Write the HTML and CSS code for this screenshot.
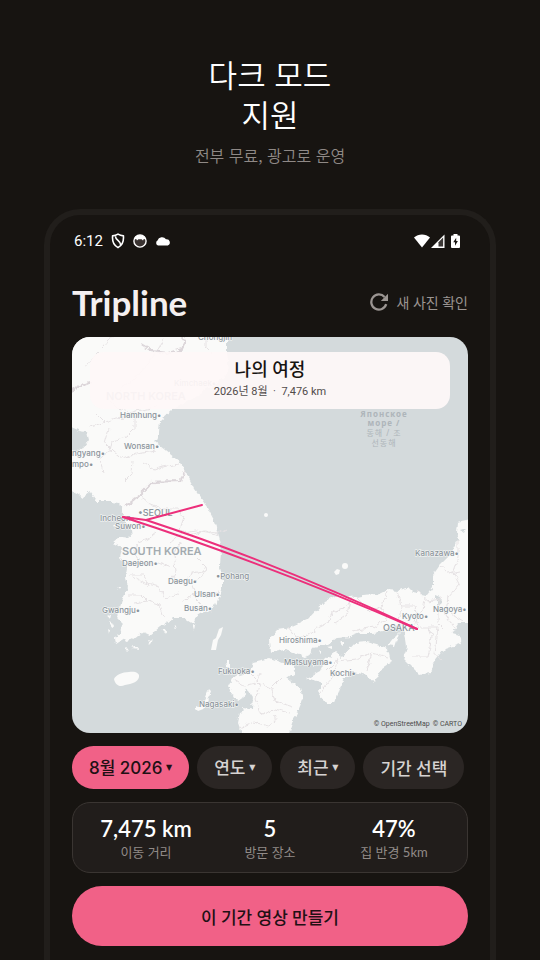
FILE: index.html
```html
<!DOCTYPE html>
<html lang="ko">
<head>
    <meta charset="UTF-8">
    <meta name="viewport" content="width=device-width, initial-scale=1.0">
    <title>Tripline</title>
    <link rel="stylesheet" href="styles.css">
</head>
<body>
    <header class="intro">
        <h1>다크 모드<br>지원</h1>
        <p>전부 무료, 광고로 운영</p>
    </header>

    <main class="phone">
        <div class="status-bar">
            <div class="status-left">
                <span class="clock">6:12</span>
                <svg width="14" height="16" viewBox="0 0 14 16" fill="none" stroke="#fff" stroke-width="1.6">
                    <path d="M7 1.2C5.3 2.3 3.4 2.8 1.6 2.9C1.1 8.3 2.6 12.5 7 14.6C11.4 12.5 12.9 8.3 12.4 2.9C10.6 2.8 8.7 2.3 7 1.2Z"/>
                    <path d="M4.4 3.2C4.5 7.4 9.6 7.4 9.7 12"/>
                </svg>
                <svg width="14" height="14" viewBox="0 0 14 14">
                    <circle cx="7" cy="7" r="6.1" fill="#3a3331" stroke="#fff" stroke-width="1.4"/>
                    <path d="M1.2 5.6C1.8 2.4 4.4 1 7 1s5.200 1.400 5.800 4.600L10.800 5 10 6.400 8.600 5.300H5.400L4 6.400 3.200 5Z" fill="#fff"/>
                </svg>
                <svg width="16" height="10" viewBox="0 0 16 10" fill="#fff">
                    <path d="M3 9.500A2.700 2.700 0 0 1 2.500 4.600 4.800 4.800 0 0 1 11 3.200 3.300 3.300 0 0 1 12.800 9.500Z"/>
                </svg>
            </div>
            <div class="status-right">
                <svg width="16" height="14" viewBox="0 0 16 14" fill="#fff"><path d="M8 13.600L0 3.500C4.500-.4 11.500-.4 16 3.500Z"/></svg>
                <svg width="14" height="14" viewBox="0 0 14 14"><path d="M0 14L13.500.5V14Z" fill="#fff"/><path d="M7.500 12.500V8.200L12.100 3.600V12.500Z" fill="#3c3836"/></svg>
                <svg class="battery" width="9" height="14" viewBox="0 0 9 14"><path d="M0 2.500Q0 1.500 1 1.500H2.500V0H6.500V1.500H8Q9 1.500 9 2.500V13Q9 14 8 14H1Q0 14 0 13Z" fill="#fff"/><path d="M5.200 3.800L2.200 8.300H4V11.800L6.900 7H5.200Z" fill="#171411"/></svg>
            </div>
        </div>

        <div class="app-bar">
            <h2>Tripline</h2>
            <button class="refresh" type="button">
                <svg width="18" height="18" viewBox="0 0 18 18">
                    <path d="M14.600 4A7.600 7.600 0 1 0 16.200 11.200" fill="none" stroke="#9b9592" stroke-width="2.300"/>
                    <path d="M18 .8V8H10.800Z" fill="#9b9592"/>
                </svg>
                새 사진 확인
            </button>
        </div>

        <section class="map" aria-label="나의 여정">
            <svg class="map-canvas" viewBox="0 0 396 396">
                <defs>
                    <filter id="coast" x="0" y="0" width="100%" height="100%" filterUnits="userSpaceOnUse">
                        <feTurbulence type="fractalNoise" baseFrequency="0.16" numOctaves="3" seed="4"/>
                        <feDisplacementMap in="SourceGraphic" scale="6" xChannelSelector="R" yChannelSelector="G"/>
                    </filter>
                </defs>
                <g filter="url(#coast)">
                    <g class="land">
                        <!-- Korea -->
                        <path d="M-9-9H155L155 15 157 35 141 48 121 61 100 73 88 84 87 95 83 105 93 113 108 125 115 137 123 153 135 170 143 185 146 200 149 213 148 230 150 240 150 253 146 261 143 268 136 275 125 278 121 286 113 281 101 281 95 286 88 290 78 298 71 295 61 303 53 305 48 296 51 286 45 280 48 270 51 261 56 250 53 240 55 230 48 220 50 211 41 206 48 200 61 201 60 193 53 186 51 176 48 166 38 165 25 165 18 155 11 160 5 156-9 150Z"/>
                        <!-- Honshu -->
                        <path d="M405 181L385 185 384 195 386 203 380 216 368 228 361 238 361 250 355 258 341 255 336 250 326 254 315 253 305 258 290 259 278 261 265 258 253 264 235 283 218 291 205 293 197 302 198 316 212 313 228 318 235 321 241 311 256 308 265 301 278 300 288 296 301 296 315 293 325 289 333 296 335 310 331 321 341 331 348 338 358 336 361 326 371 313 390 306 388 298 380 296 386 286 405 286Z"/>
                        <!-- Shikoku -->
                        <path d="M253 323L263 315 270 320 283 306 295 305 316 311 319 325 310 331 302 346 295 338 281 335 273 341 268 351 263 366 253 366 246 355 250 346 235 341 248 334Z"/>
                        <!-- Kyushu -->
                        <path d="M198 321L181 325 178 335 161 340 156 350 161 360 171 363 175 351 181 360 180 371 168 376 166 386 173 405H215L223 380 231 361 228 351 215 341 223 335 220 328 211 326Z"/>
                        <path d="M328 294L323 309 316 308 322 300ZM154 324h4v6h-3ZM123 371l8-4 6-14 2 2-5 16-8 3Z"/>
                        <path d="M43 300l7-4 2 6-8 5ZM38 285l4 2-2 4ZM35 277l4 1-1 5ZM60 311l5-2 2 3ZM53 311l4 1-2 2ZM76 302l4 1-2 3ZM100 289l3-1 1 5ZM121 287l3 1-1 6ZM90 292l4 1-1 4ZM36 292l3 2-2 3ZM248 306h5v3h-4ZM256 310l5-1v3ZM268 305h4v3ZM246 314h3v3ZM170 372l6 1-4 5ZM240 326l3 1-3 3ZM40 187l3 1-1 3ZM45 250l3 1-1 3Z"/>
                    </g>
                    <g class="water">
                        <path d="M-5 88L8 94 15 95 17 103 10 113-5 112Z"/>
                        <path d="M364 258l5 2-1 8-4 2ZM388 193l6-2-2 5Z"/>
                    </g>
                    <g class="borders">
                        <path d="M0 53l8-4 10-4M15 30l8-12 8-8 10-12M40 64l10-14 12-8 14-16 8-10 8-14M70 8l10 6 16 2 14-4 4-8-6-8M134 0v10l6 6M36 62l10 10 10 3 14-2 14-3M24 76l8 8M18 90l12-4 14-5 16-2 3-6M63 80v12l-8 8-16 4-2 10M37 92l-4 14 8 8 10 8 14-6 18-3M39 114l-12 8 4 12M61 124l-1 12-8 8M72 126l10 7 8-3 18-3"/>
                        <path d="M53 168l16-12 12-12 28 0 4-12M66 158l10 8 14 6 16 0 6 8-4 12 10 6 14-4 14 2 8-4M84 196l-8 6-10 4-4 10 8 12 16-2 12 4M98 206l12-10 14-2 22 4M108 206l-6 10 2 18-6 10M124 220l10 10-4 10-10 6 4 10-14 10M60 240l12 6 14 4 8 12 14-6M62 266l14-2 12 4 4 12M56 258l14 0 8 8M110 244l12-8 12-3M134 260l14-6M118 256l14 14 8 4M76 250l-4-12-14 0"/>
                        <path d="M216 290l8 10 12-2 10-8 10-5 4-10 12-4 8-10M278 262l-3 16-12 8M284 260l14 14 12-4 5-15M310 270l4 12-12 8-22 4M325 255l4 14 14 0 2 16M330 270l-4 12 4 8M352 262l-2 12-8 6 4 12M345 254l12 10 14-3M368 229l10 8 10-2M386 203v18l-5 14 6 12-11 13M376 258l-2 20 8 12M366 262v24l6 6M348 290l18 0-3 28 6 5M356 290l4 10-4 20-15 0M378 276l13 8"/>
                        <path d="M254 334l10-10 20-2 16-6 16 4M266 320l-4 18-14 18M300 316l-6 18M179 337l10 10 10 4 10-10M162 343l10 6 12-3 4-10M189 348l-6 14 6 16 14-6 14 4M199 350l4 14 18 6M167 391l14-6 16 4 8-10"/>
                    </g>
                    <path class="frontier" d="M53 169l16-12 12-12 28-1 4-10M-2 54l10-5 10-4M70 8l10 6 16 2 14-4 4-8-6-8"/>
                </g>
                <g class="land">
                    <path d="M42 342C44 338 50 335 57 335 63 334 68 336 67 340 66 345 60 347 53 348 47 351 43 347 42 342Z"/>
                    <path d="M147 292L151 290 149 298 146 303 144 313 139 313 141 303 144 301Z"/>
                    <circle cx="273" cy="229" r="3"/>
                    <path d="M262 235l3-3 3 1-1 4-3 1Z"/>
                    <circle cx="194" cy="178" r="2"/>
                </g>
                <g class="labels">
                    <text class="country" x="34" y="63">NORTH KOREA</text>
                    <text class="country" x="50" y="218">SOUTH KOREA</text>
                    <text x="126" y="3">Chongjin</text>
                    <text x="102" y="49">Kimchaek•</text>
                    <text x="48" y="81">Hamhung•</text>
                    <text x="52" y="112">Wonsan•</text>
                    <text x="0" y="119">ngyang•</text>
                    <text x="0" y="130">mpo•</text>
                    <text class="capital" x="66" y="179">•SEOUL</text>
                    <text x="28" y="184">Incheon•</text>
                    <text x="43" y="192">Suwon•</text>
                    <text x="50" y="229">Daejeon•</text>
                    <text x="96" y="247">Daegu•</text>
                    <text x="144" y="242">•Pohang</text>
                    <text x="122" y="260">Ulsan•</text>
                    <text x="112" y="274">Busan•</text>
                    <text x="30" y="276">Gwangju•</text>
                    <text x="146" y="337">Fukuoka•</text>
                    <text x="127" y="370">Nagasaki•</text>
                    <text x="207" y="306">Hiroshima•</text>
                    <text x="212" y="328">Matsuyama•</text>
                    <text x="258" y="339">Kochi•</text>
                    <text x="330" y="282">Kyoto•</text>
                    <text class="capital" x="311" y="294">OSAKA</text>
                    <text x="361" y="275">Nagoya•</text>
                    <text x="343" y="219">Kanazawa•</text>
                </g>
                <g class="sea">
                    <text x="312" y="80">Японское</text>
                    <text x="312" y="89">море /</text>
                    <text class="ko" x="312" y="99">동해 / 조</text>
                    <text class="ko" x="312" y="109">선동해</text>
                </g>
                <g class="route">
                    <path d="M130 168L74 183Q205 226 345 292"/>
                    <path d="M51 180L74 183"/>
                    <path d="M51 180Q190 225 345 292"/>
                </g>
            </svg>
            <div class="map-card">
                <h3>나의 여정</h3>
                <p>2026년 8월 &nbsp;·&nbsp; 7,476 km</p>
            </div>
            <div class="credits">
                <a href="#osm">© OpenStreetMap</a>
                <a href="#carto">© CARTO</a>
            </div>
        </section>

        <div class="filters">
            <label class="chip active">
                <select aria-label="월"><option>8월 2026</option></select>
                <span class="arrow">▼</span>
            </label>
            <label class="chip">
                <select aria-label="연도"><option>연도</option></select>
                <span class="arrow">▼</span>
            </label>
            <label class="chip">
                <select aria-label="최근"><option>최근</option></select>
                <span class="arrow">▼</span>
            </label>
            <button class="chip" type="button">기간 선택</button>
        </div>

        <dl class="stats">
            <div><dd>7,475 km</dd><dt>이동 거리</dt></div>
            <div><dd>5</dd><dt>방문 장소</dt></div>
            <div><dd>47%</dd><dt>집 반경 5km</dt></div>
        </dl>

        <button class="create" type="button">이 기간 영상 만들기</button>
    </main>
</body>
</html>
```

FILE: styles.css
```css
* { box-sizing: border-box; }
body {
    margin: 0;
    min-height: 100vh;
    display: flex;
    flex-direction: column;
    background-color: #171411;
    color: #fff;
    font-family: Lato, "Noto Sans CJK KR", sans-serif;
}
h1, h2, h3, p, dl, dd { margin: 0; }
button, select {
    font-family: inherit;
    color: inherit;
    border: none;
    padding: 0;
    background: none;
    cursor: pointer;
}
svg { display: block; }

.intro {
    padding: 54px 20px 0;
    text-align: center;
    font-family: "Noto Sans CJK KR", sans-serif;
}
.intro h1 { font-size: 31px; line-height: 40px; font-weight: 350; }
.intro p { margin-top: 9px; font-size: 16px; line-height: 24px; font-weight: 350; color: #8f8986; }

.phone {
    flex: 1;
    margin: 42px 44px 0;
    padding: 0 22px 14px;
    border: 6px solid #211e1b;
    border-bottom: none;
    border-radius: 36px 36px 0 0;
}

/* status bar */
.status-bar {
    display: flex;
    justify-content: space-between;
    align-items: center;
    height: 52px;
    padding: 0 8px 0 2px;
}
.status-left, .status-right { display: flex; align-items: center; }
.status-left { gap: 8px; }
.status-right { gap: 1px; }
.battery { margin-left: 5px; }
.clock { font: 15px Roboto, sans-serif; }

.app-bar {
    display: flex;
    justify-content: space-between;
    align-items: center;
    height: 70px;
}
.app-bar h2 { font-size: 35px; line-height: 44px; font-weight: 700; color: #f5f0f0; }
.refresh { display: flex; align-items: center; gap: 8px; font-size: 14px; color: #9b9592; }

/* map */
.map {
    position: relative;
    overflow: hidden;
    border-radius: 18px;
    background-color: #d4dadc;
}
.map-canvas { width: 100%; height: auto; }
.land { fill: #fafaf9; }
.water { fill: #d4dadc; }
.borders { fill: none; stroke: #e6e2e4; stroke-width: 1; }
.frontier { fill: none; stroke: #dcd6da; stroke-width: 2; }
.labels {
    font: 500 8px Inter, sans-serif;
    fill: #8b949b;
    stroke: #fafaf9;
    stroke-width: 1;
    paint-order: stroke;
}
.labels .country { font-size: 11px; font-weight: 600; fill: #a3abb0; }
.labels .capital { font-size: 9px; }
.sea {
    font: 700 8px "Noto Sans", "Noto Sans CJK KR", sans-serif;
    letter-spacing: 1px;
    fill: #aeb5ba;
    text-anchor: middle;
}
.sea .ko { font-weight: 400; }
.route { fill: none; stroke: #ec2f7b; stroke-width: 2; stroke-linecap: round; stroke-linejoin: round; }
.map-card {
    position: absolute;
    top: 15px;
    left: 18px;
    right: 18px;
    padding: 4px 0 8px;
    border-radius: 14px;
    background-color: rgba(254, 247, 248, 0.93);
    text-align: center;
    color: #171411;
}
.map-card h3 { font-size: 18px; line-height: 27px; font-weight: 500; }
.map-card p { font: 11px/18px Roboto, "Noto Sans CJK KR", sans-serif; color: #514b4a; }
.credits {
    position: absolute;
    right: 6px;
    bottom: 4px;
    display: flex;
    gap: 3px;
    font: 7px/10px Roboto, sans-serif;
}
.credits a { color: #4b4b4b; text-decoration: none; }

/* filters */
.filters { display: flex; gap: 8px; margin-top: 13px; }
.chip {
    display: flex;
    align-items: center;
    gap: 3px;
    height: 43px;
    padding: 0 17px;
    border-radius: 22px;
    background-color: #2b2624;
    color: #d6d3d2;
    font-size: 17px;
    font-weight: 500;
}
.chip select { appearance: none; font-family: Inter, "Noto Sans CJK KR", sans-serif; font-size: 17px; font-weight: 500; }
.chip.active { background-color: #f16187; color: #211014; }
.arrow { font: 8px "DejaVu Sans", sans-serif; }

.stats {
    display: grid;
    grid-template-columns: repeat(3, 1fr);
    margin-top: 13px;
    padding: 13px 11px 10px;
    border: 1px solid #3a3532;
    border-radius: 18px;
    background-color: #211d1b;
    text-align: center;
}
.stats div { display: flex; flex-direction: column; }
.stats dd { font-size: 22px; line-height: 26px; font-weight: 600; }
.stats dt { font-size: 13px; line-height: 20px; color: #918b88; }

.create {
    width: 100%;
    height: 60px;
    margin-top: 13px;
    border-radius: 30px;
    background-color: #f16187;
    color: #211014;
    font-size: 17px;
    font-weight: 500;
}
```
